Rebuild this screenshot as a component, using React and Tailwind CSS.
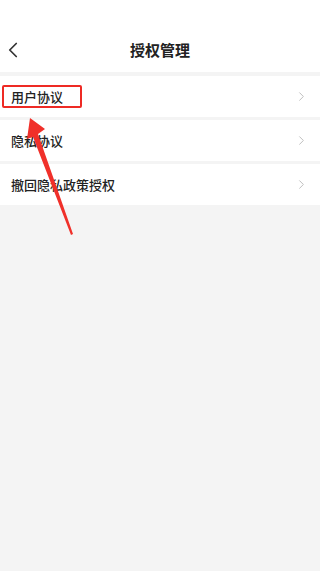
import { ChevronLeft, ChevronRight } from "lucide-react";

const items = ["用户协议", "隐私协议", "撤回隐私政策授权"];

const App = () => {
  return (
    <div
      className="relative min-h-screen bg-[#f4f4f4] text-[#222]"
      style={{ fontFamily: '"Noto Sans CJK SC", "Noto Sans", sans-serif' }}
    >
      {/* header */}
      <div className="bg-white pt-[28px]">
        <div className="relative flex h-[44px] items-center justify-center">
          <ChevronLeft className="absolute left-0 h-[26px] w-[26px] text-[#333]" strokeWidth={1.6} />
          <h1 className="text-[15px] font-bold">授权管理</h1>
        </div>
      </div>

      {/* list */}
      <div className="mt-[4px] flex flex-col gap-[3px]">
        {items.map((label) => (
          <div key={label} className="flex h-[41px] items-center justify-between bg-white px-[11px]">
            <span className="text-[13px] font-medium">{label}</span>
            <ChevronRight className="h-[15px] w-[15px] text-[#bbb]" strokeWidth={1.5} />
          </div>
        ))}
      </div>

      {/* highlight box */}
      <div className="absolute left-[2px] top-[85px] h-[23px] w-[80px] rounded-[2px] border-2 border-[#ee2a24]" />

      {/* arrow */}
      <svg className="absolute left-0 top-0" width="310" height="260" viewBox="0 0 310 260">
        <polygon
          points="30,118 45,129 38,134 73,234 71,235 33,137 27,139"
          fill="#f0302a"
        />
      </svg>
    </div>
  );
};

export default App;
